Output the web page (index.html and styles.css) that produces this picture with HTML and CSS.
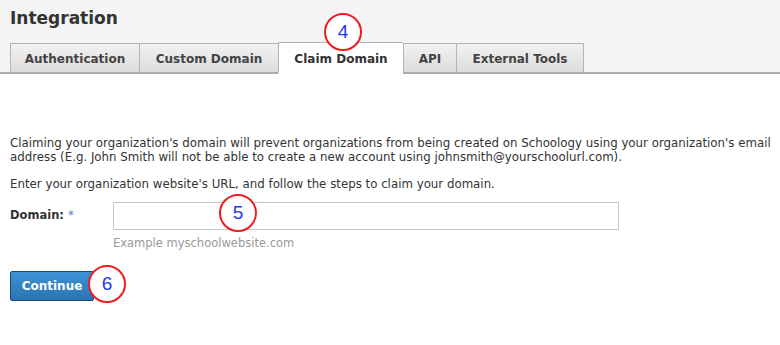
FILE: index.html
```html
<!DOCTYPE html>
<html>
<head>
<meta charset="utf-8">
<link rel="stylesheet" href="styles.css">
</head>
<body>
<div class="page">
  <div class="header">
    <h1 class="title">Integration</h1>
    <div class="tabs">
      <div class="tab tab-auth">Authentication</div>
      <div class="tab tab-custom">Custom Domain</div>
      <div class="tab tab-claim active">Claim Domain</div>
      <div class="tab tab-api">API</div>
      <div class="tab tab-ext">External Tools</div>
    </div>
  </div>
  <div class="content">
    <p class="desc">Claiming your organization's domain will prevent organizations from being created on Schoology using your organization's email address (E.g. John Smith will not be able to create a new account using johnsmith@yourschoolurl.com).</p>
    <p class="desc desc-last">Enter your organization website's URL, and follow the steps to claim your domain.</p>
    <div class="field">
      <label class="label">Domain: <span class="req">*</span></label>
      <div class="control">
        <input class="input" type="text">
        <div class="hint">Example myschoolwebsite.com</div>
      </div>
    </div>
    <div class="actions">
      <button class="btn">Continue</button>
    </div>
  </div>
  <div class="marker m4">4</div>
  <div class="marker m5">5</div>
  <div class="marker m6">6</div>
</div>
</body>
</html>
```
FILE: styles.css
```css
html, body {
  margin: 0;
  padding: 0;
  background: #fff;
}
body {
  font-family: "DejaVu Sans", "Liberation Sans", sans-serif;
  color: #333;
}
.page {
  position: relative;
  width: 780px;
  height: 345px;
  overflow: hidden;
}
.header {
  background: #f4f4f4;
  border-bottom: 2px solid #ababab;
  padding: 0 0 0 10px;
  display: flex;
  flex-direction: column;
}
.title {
  margin: 0;
  padding-top: 8px;
  height: 34px;
  font-size: 17px;
  font-weight: bold;
  color: #333;
  line-height: 20px;
}
.tabs {
  display: flex;
  align-items: flex-end;
  margin-bottom: -2px;
}
.tab {
  box-sizing: border-box;
  height: 31px;
  border: 1px solid #b4b4b4;
  border-bottom: 2px solid #ababab;
  border-right: none;
  background: linear-gradient(#f2f2f2, #dcdcdc);
  font-size: 12px;
  font-weight: bold;
  color: #444;
  display: flex;
  align-items: center;
  justify-content: center;
  padding-top: 2px;
}
.tab-auth { width: 129px; }
.tab-custom { width: 139px; }
.tab-claim { width: 125px; }
.tab-api { width: 53px; }
.tab-ext { width: 128px; border-right: 1px solid #b4b4b4; }
.tab.active {
  height: 32px;
  background: #fff;
  color: #333;
  border-color: #b4b4b4;
  border-bottom: 2px solid #fff;
}
.content {
  padding: 62px 4px 0 10px;
}
.desc {
  margin: 0 0 13px 0;
  font-size: 11.8px;
  line-height: 14px;
  color: #333;
}
.desc-last {
  margin-bottom: 11px;
}
.field {
  display: flex;
}
.label {
  width: 103px;
  font-size: 11.5px;
  font-weight: bold;
  padding-top: 6px;
  color: #333;
}
.req {
  color: #5a7ed6;
  font-weight: normal;
}
.input {
  box-sizing: border-box;
  width: 506px;
  height: 28px;
  border: 1px solid #c6c6c6;
  margin: 0;
  padding: 0 4px;
  outline: none;
  display: block;
}
.hint {
  font-size: 11.5px;
  line-height: 14px;
  color: #999;
  margin-top: 6px;
}
.actions {
  margin-top: 21px;
}
.btn {
  box-sizing: border-box;
  width: 84px;
  height: 30px;
  border: 1px solid #1c4c73;
  border-radius: 2px;
  background: linear-gradient(#3d93d4, #2b73b4);
  color: #fff;
  font-family: "DejaVu Sans", "Liberation Sans", sans-serif;
  font-size: 12px;
  font-weight: bold;
  padding: 0;
}
.marker {
  position: absolute;
  box-sizing: border-box;
  width: 38px;
  height: 38px;
  border: 2.5px solid #ee1c1c;
  border-radius: 50%;
  background: #fff;
  color: #2439e6;
  font-family: "Liberation Sans", sans-serif;
  font-size: 19px;
  display: flex;
  align-items: center;
  justify-content: center;
}
.m4 { left: 324px; top: 13px; }
.m5 { left: 219px; top: 194px; }
.m6 { left: 88px; top: 265px; }
```
